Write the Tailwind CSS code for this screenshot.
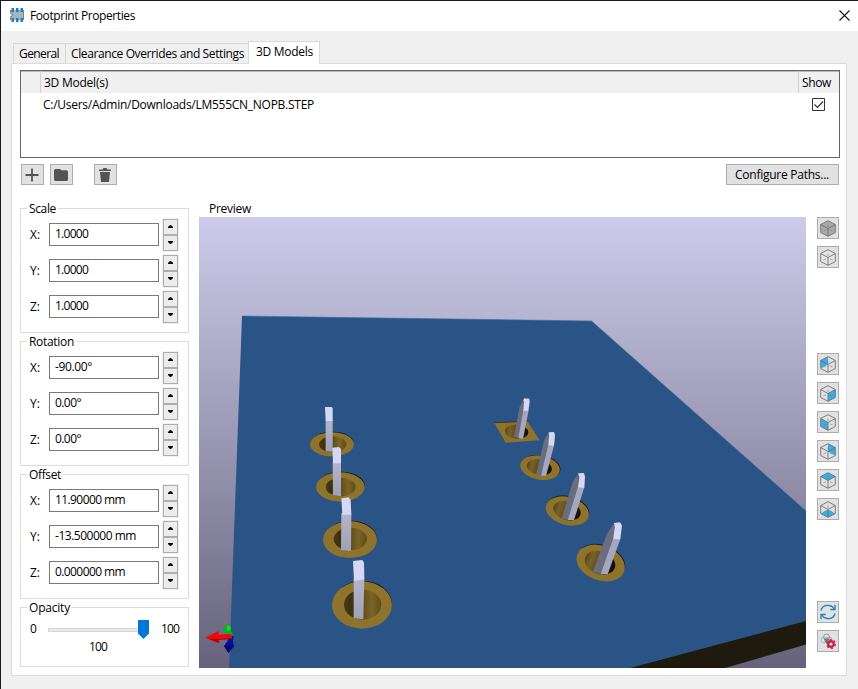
<!DOCTYPE html>
<html lang="en">
<head>
<meta charset="utf-8">
<title>Footprint Properties</title>
<script src="https://cdn.jsdelivr.net/npm/@tailwindcss/browser@4"></script>
</head>
<body class="h-[689px] w-[858px] overflow-hidden bg-[#f0f0f0] font-['Open_Sans','Noto_Sans',sans-serif] text-[12px] leading-4 text-black">
<div class="flex h-full w-full flex-col border-t border-l border-[#1c1a20]">
  <header class="flex h-[30px] shrink-0 items-center bg-white pr-[5px] pl-[9px]">
    <svg class="-mt-[2px] h-4 w-4" viewBox="0 0 16 16">
      <path d="M0 3h14v10H0v-3.500a1.500 1.500 0 0 0 0-3z" fill="#a9b4c0"/>
      <path d="M.5 3v3a2 2 0 0 1 0 4v3M13.500 3v10" fill="none" stroke="#7b858f"/>
      <path d="M1.500 1H4v4H1.500zM6 1h2.500v4H6zM10.500 1H13v4h-2.500zM1.500 11H4v4H1.500zM6 11h2.500v4H6zM10.500 11H13v4h-2.500z" fill="#1a81c4"/>
    </svg>
    <h1 class="ml-1 grow"><span class="whitespace-nowrap" data-w="105">Footprint Properties</span></h1>
    <svg class="h-[17px] w-[17px]" viewBox="0 0 17 17"><path d="M3.500 2.500l10 10M13.500 2.500l-10 10" stroke="#111" stroke-width="1.100"/></svg>
  </header>

  <main class="flex grow flex-col pr-[11px] pb-[13px] pl-[10px]">
    <nav class="flex h-[32px] shrink-0 items-end pl-[2px]">
      <div class="flex h-[20px] w-[52px] items-center border-t border-l border-[#d9d9d9] pl-[5px]"><span class="whitespace-nowrap" data-w="40">General</span></div>
      <div class="flex h-[20px] w-[183px] items-center border-t border-l border-[#d9d9d9] pl-[5px]"><span class="whitespace-nowrap" data-w="173">Clearance Overrides and Settings</span></div>
      <div class="relative z-10 -mb-px flex h-[23px] w-[72px] items-center border border-b-0 border-[#d9d9d9] bg-white pb-[2px] pl-[7px]"><span class="whitespace-nowrap" data-w="57">3D Models</span></div>
    </nav>

    <section class="flex grow flex-col border border-[#dcdcdc] bg-white pt-[6px] pr-[6px] pb-[7px] pl-[8px]">
      <div class="h-[88px] shrink-0 border border-[#646468]">
        <div class="flex h-[22px] bg-[#f0f0f0] shadow-[inset_0_1px_0_#b8b8b8]">
          <div class="w-5 border-r border-[#d0d0d0]"></div>
          <div class="flex grow items-center border-r border-[#d0d0d0] pt-px pl-[3px]"><span class="whitespace-nowrap" data-w="64">3D Model(s)</span></div>
          <div class="flex w-10 items-center pt-px pl-[3px]"><span class="whitespace-nowrap" data-w="29">Show</span></div>
        </div>
        <div class="flex h-[23px] items-center pr-[14px] pl-[22px]">
          <span class="whitespace-nowrap" data-w="271">C:/Users/Admin/Downloads/LM555CN_NOPB.STEP</span>
          <svg class="ml-auto h-[13px] w-[13px]" viewBox="0 0 13 13"><path d="M.5.5h12v12H.5z" fill="#fff" stroke="#333"/><path d="M2.500 6.500l3 3 5.500-6" fill="none" stroke="#333" stroke-width="1.200"/></svg>
        </div>
      </div>

      <div class="mt-[6px] flex h-[21px] shrink-0 pr-px pl-px">
        <button class="flex w-[23px] items-center border border-[#adadad] bg-[#e1e1e1] pl-[2px]"><svg class="h-4 w-4" viewBox="0 0 16 16"><path d="M8 1.500v13M1.500 8h13" stroke="#545454" stroke-width="1.800"/></svg></button>
        <button class="ml-[6px] flex w-[23px] items-center border border-[#adadad] bg-[#e1e1e1] pl-[2px]"><svg class="h-4 w-4" viewBox="0 0 16 16"><path d="M1 3.500q0-1.500 1.500-1.500h4q1 0 1.700 1.300h5.300q1.500 0 1.500 1.500v7.700q0 1.500-1.500 1.500h-11Q1 14 1 12.500z" fill="#545454"/></svg></button>
        <button class="ml-[21px] flex w-[23px] items-center border border-[#adadad] bg-[#e1e1e1] pl-[2px]"><svg class="h-4 w-4" viewBox="0 0 16 16"><path d="M2 2.500h3.500L6.500 1h3l1 1.500H14V4H2zM3 5h10l-1 10H4z" fill="#545454"/></svg></button>
        <button class="ml-auto flex w-[113px] items-center border border-[#adadad] bg-[#e1e1e1] pl-2"><span class="whitespace-nowrap" data-w="94">Configure Paths...</span></button>
      </div>

      <div class="mt-[16px] flex h-[467px] shrink-0">
        <div id="groups" class="flex w-[169px] shrink-0 flex-col pt-[7px]"></div>

        <div class="ml-[10px] flex w-[607px] shrink-0 flex-col">
          <div class="h-4 pl-[10px]"><span class="whitespace-nowrap" data-w="42">Preview</span></div>
          <svg class="h-[451px] w-[607px]" viewBox="199 217 607 451">
            <defs>
              <linearGradient id="sky" x1="0" y1="0" x2="0" y2="1"><stop offset="0" stop-color="#ccccea"/><stop offset="1" stop-color="#66627c"/></linearGradient>
              <linearGradient id="hole" x1="0" y1="0" x2="1" y2="0"><stop offset="0" stop-color="#4a3b14"/><stop offset=".18" stop-color="#3c300f"/><stop offset=".5" stop-color="#5f4d1b"/><stop offset=".75" stop-color="#7c6426"/><stop offset="1" stop-color="#5d4b1a"/></linearGradient>
              <linearGradient id="holeR" x1="0" y1="0" x2="1" y2="0"><stop offset="0" stop-color="#55451a"/><stop offset=".2" stop-color="#7a6226"/><stop offset=".55" stop-color="#554418"/><stop offset=".95" stop-color="#100d05"/></linearGradient>
              <linearGradient id="pin" x1="0" y1="0" x2="0" y2="1"><stop offset="0" stop-color="#b3b5cb"/><stop offset="1" stop-color="#9fa1b6"/></linearGradient>
            </defs>
            <path d="M199 217h607v451H199z" fill="url(#sky)"/>
            <path d="M242 316L591.500 321 806 511v111L630 669H229z" fill="#2a5485"/>
            <path d="M242 316L591.500 321 806 511" fill="none" stroke="#3f6a9e" stroke-opacity=".6"/>
            <path d="M630 668l176-47v23.500l-81 23.500z" fill="#1e1a0e"/>

            <g transform="translate(300 395) scale(.33333)">
              <ellipse cx="97" cy="146" rx="65" ry="36" fill="#15130e"/>
              <ellipse cx="96" cy="148" rx="66" ry="36" fill="#8d732c"/>
              <ellipse cx="98" cy="148" rx="41" ry="24" fill="url(#hole)"/>
              <path d="M77 76h21v94l-21-1z" fill="url(#pin)"/><path d="M75 36h20l3 4v38H77z" fill="#d5d8f4"/>
              <ellipse cx="123" cy="273" rx="71" ry="43" fill="#15130e"/>
              <ellipse cx="121" cy="276" rx="73" ry="44" fill="#8d732c"/>
              <ellipse cx="122" cy="276" rx="45" ry="28" fill="url(#hole)"/>
              <path d="M98 200h25v104l-24-3z" fill="url(#pin)"/><path d="M97 158l20-2 6 6v43H99z" fill="#d5d8f4"/>
            </g>
            <g transform="translate(310 490) scale(.33333)">
              <ellipse cx="122" cy="146" rx="79" ry="54" fill="#15130e"/>
              <ellipse cx="120" cy="149" rx="81" ry="55" fill="#8d732c"/>
              <ellipse cx="121" cy="147" rx="50" ry="34" fill="url(#hole)"/>
              <path d="M94 70h30l-1 113-30-3z" fill="url(#pin)"/><path d="M94 25l22-3 6 8 2 44H97z" fill="#d5d8f4"/>
              <ellipse cx="158" cy="342" rx="88" ry="70" fill="#15130e"/>
              <ellipse cx="156" cy="345" rx="90" ry="71" fill="#8d732c"/>
              <ellipse cx="158" cy="344" rx="56" ry="45" fill="url(#hole)"/>
              <path d="M131 265h32l-3 123-29-3z" fill="url(#pin)"/><path d="M129 213l28-3 5 8 1 50-31 4z" fill="#d5d8f4"/>
            </g>
            <g transform="translate(485 390) scale(.33333)">
              <path d="M28 98l99-4 37 57-102 7z" fill="#8d732c"/><path d="M28 98l99-4" stroke="#3a3322" stroke-width="3"/>
              <ellipse cx="95" cy="125" rx="35" ry="21" transform="rotate(5 95 125)" fill="url(#holeR)"/>
              <path d="M116 26l-13 28-16 87 14 4 18-80z" fill="#6b6d7e"/><path d="M115 61l16 1-17 84-14-1z" fill="#a5a7bf"/><path d="M118 25l15 1 1 10-4 27-15-1 2-27-2-5z" fill="#d5d8f4"/>

              <ellipse cx="167" cy="231" rx="60" ry="35" transform="rotate(10 167 231)" fill="#15130e"/>
              <ellipse cx="165" cy="233" rx="60" ry="36" transform="rotate(10 165 233)" fill="#8d732c"/>
              <ellipse cx="163" cy="232" rx="38" ry="23" transform="rotate(12 163 232)" fill="url(#holeR)"/>
              <path d="M190 128l-13 24-24 102 15 3 25-90z" fill="#6b6d7e"/><path d="M190 164l17 3-24 90h-15z" fill="#a5a7bf"/><path d="M191 127l16-1 3 9-3 33-17-2 2-29z" fill="#d5d8f4"/>

              <ellipse cx="249" cy="359" rx="65" ry="40" transform="rotate(15 249 359)" fill="#15130e"/>
              <ellipse cx="247" cy="363" rx="66" ry="42" transform="rotate(15 247 363)" fill="#8d732c"/>
              <ellipse cx="246" cy="362" rx="42" ry="28" transform="rotate(17 246 362)" fill="url(#holeR)"/>
              <path d="M280 251l-16 22-34 112 18 5 33-97z" fill="#6b6d7e"/><path d="M279 290l19 2-31 98h-19z" fill="#a5a7bf"/><path d="M279 250l18-1 3 11-2 34-19-2 4-30z" fill="#d5d8f4"/>

              <ellipse cx="349" cy="515" rx="74" ry="50" transform="rotate(20 349 515)" fill="#15130e"/>
              <ellipse cx="347" cy="519" rx="75" ry="52" transform="rotate(20 347 519)" fill="#8d732c"/>
              <ellipse cx="345" cy="518" rx="47" ry="34" transform="rotate(20 345 518)" fill="url(#holeR)"/>
              <path d="M387 400l-20 30-44 115 24 7 41-105z" fill="#6b6d7e"/><path d="M385 445l21 2-38 106-21-1z" fill="#a5a7bf"/><path d="M387 399l18-2 6 10-5 41-21-1 4-37z" fill="#d5d8f4"/>
            </g>

            <g transform="translate(0 460) scale(.33333)">
              <path d="M669 507l10-12h9l6 8-2 6 8 17-8 2-11-11-8 2z" fill="#00b814"/><path d="M680 497h10l2 12-9 4z" fill="#17dc28"/>
              <path d="M686 528h15l-2 17 3 15-17 18-13-20 11-16z" fill="#0b0c9e"/><path d="M672 558l28-2-15 22z" fill="#07076c"/>
              <path d="M615 533l41-20v11l37-2q5 6 3 13l-39 2v12z" fill="#f20606"/><path d="M625 536l31 1 38-4v4l-38 3v9z" fill="#b80000"/>
            </g>
          </svg>
        </div>

        <aside id="views" class="ml-[11px] flex w-[22px] shrink-0 flex-col pt-4"></aside>
      </div>
    </section>
  </main>
</div>

<script>
const axisRow = (label, value, w) => `
  <div class="flex h-8 items-center">
    <span class="w-5 pl-px">${label}:</span>
    <div class="mb-px flex h-[23px] w-[110px] items-center border border-[#7a7a7a] bg-white pb-px pl-[5px]"><span class="whitespace-nowrap" data-w="${w}">${value}</span></div>
    <div class="ml-1 flex h-8 w-[15px] flex-col shadow-[0_0_0_1px_#f0f0f0]">
      <button class="flex h-4 items-center justify-center border border-[#adadad] bg-[#ececec] pb-px"><svg class="h-[3px] w-[5px]" viewBox="0 0 5 3"><path d="M2 0h1l2 2v1H0V2z"/></svg></button>
      <button class="flex h-4 items-center justify-center border border-[#adadad] bg-[#ececec] pb-px"><svg class="h-[3px] w-[5px]" viewBox="0 0 5 3"><path d="M2 3h1l2-2V0H0v1z"/></svg></button>
    </div>
  </div>`;
const group = (title, w, rows) => `
  <fieldset class="relative mb-2 flex h-[125px] shrink-0 flex-col gap-1 border border-[#dcdcdc] pt-[10px] pl-[8px]">
    <span class="absolute -top-[8px] left-[6px] bg-white px-[2px]"><span class="whitespace-nowrap" data-w="${w}">${title}</span></span>
    ${rows.map(r => axisRow(...r)).join('')}
  </fieldset>`;
document.getElementById('groups').innerHTML =
  group('Scale', 27, [['X', '1.0000', 33], ['Y', '1.0000', 33], ['Z', '1.0000', 33]]) +
  group('Rotation', 45, [['X', '-90.00°', 37], ['Y', '0.00°', 26], ['Z', '0.00°', 26]]) +
  group('Offset', 32, [['X', '11.90000 mm', 70], ['Y', '-13.500000 mm', 81], ['Z', '0.000000 mm', 70]]) + `
  <fieldset class="relative h-[60px] shrink-0 border border-[#dcdcdc]">
    <span class="absolute -top-[8px] left-[6px] bg-white px-[2px]"><span class="whitespace-nowrap" data-w="41">Opacity</span></span>
    <div class="mt-[12px] flex h-[19px] items-center pl-[9px]">
      <span class="w-[18px] pb-[2px]">0</span>
      <div class="h-1 w-[90px] border border-r-0 border-[#d6d6d6] bg-[#e7eaea]"></div>
      <svg class="h-[19px] w-[11px]" viewBox="0 0 11 19"><path d="M0 0h11v13.500L5.500 19 0 13.500z" fill="#0078d7"/></svg>
      <span class="ml-[12px] pb-[2px]"><span class="whitespace-nowrap" data-w="18">100</span></span>
    </div>
    <div class="pl-[68px]"><span class="whitespace-nowrap" data-w="18">100</span></div>
  </fieldset>`;

const cube = (face, color) => `
  <svg class="h-[17px] w-4" viewBox="0 0 16 17" fill="none">
    <path d="${face}" fill="${color}"/>
    <path d="M8 7V4.500M6 9.800L3.500 11M10 9.800l2.500 1.200" stroke="#777" stroke-opacity=".6"/>
    <path d="M8 .7l7.300 3.800v8L8 16.300.7 12.500v-8zM.7 4.500L8 8.500l7.300-4M8 8.500v7.800" stroke="#6c6c6c" stroke-opacity=".85"/>
  </svg>`;
const blue = '#35b0ea';
const buttons = [
  ['mt-0', cube('M8 .7l7.300 3.800v8L8 16.300.7 12.500v-8z', '#aaaaaa')],
  ['mt-[7px]', cube('M8 .7l7.300 3.800v8L8 16.300.7 12.500v-8z', '#e6e6e6')],
  ['mt-[85px]', cube('M.7 4.500L8 .7v7.800l-7.300 4z', blue)],
  ['mt-[7px]', cube('M8 8.500l7.300-4v8L8 16.300z', blue)],
  ['mt-[7px]', cube('M8 8.500L.7 4.500v8L8 16.300z', blue)],
  ['mt-[7px]', cube('M8 .7l7.300 3.800v8L8 8.500z', blue)],
  ['mt-[7px]', cube('M8 .7l7.300 3.800L8 8.500.7 4.500z', blue)],
  ['mt-[7px]', cube('M8 8.500l7.300 4L8 16.300.7 12.500z', blue)],
  ['mt-[81px]', `<svg class="h-4 w-4" viewBox="0 0 16 16" fill="none" stroke="#1a81c4" stroke-width="1.300"><path d="M1 6.500C2.500 0 11 0 14 4.500M15 .8v4.700h-4.700M15 9.500C13.500 16 5 16 2 11.500M1 15.200v-4.700h4.700"/></svg>`],
  ['mt-[7px]', `<svg class="h-4 w-4" viewBox="0 0 16 16" fill="none"><circle cx="6.500" cy="4" r="3" stroke="#999"/><circle cx="4" cy="7" r="3" stroke="#8fb9d6"/><circle cx="9" cy="7" r="3" stroke="#9aa8b2"/><path d="M4 5.500h5L8 9H5z" fill="#777"/><circle cx="11" cy="11" r="2.800" stroke="#cc2444" stroke-width="2.400"/><circle cx="11" cy="11" r="4.300" stroke="#cc2444" stroke-width="1.400" stroke-dasharray="2.300 2.203"/></svg>`]
];
document.getElementById('views').innerHTML = buttons.map(([gap, icon]) =>
  `<button class="${gap} flex h-[22px] w-[22px] shrink-0 items-center justify-center border border-[#adadad] bg-[#e1e1e1]">${icon}</button>`).join('');

// Fit each label to its nominal UI width by adjusting letter spacing.
const pen = document.createElement('canvas').getContext('2d');
pen.font = '12px "Open Sans"';
document.querySelectorAll('[data-w]').forEach(el => {
  const text = el.textContent;
  el.style.letterSpacing = (el.dataset.w - pen.measureText(text).width) / text.length + 'px';
});
</script>
</body>
</html>
